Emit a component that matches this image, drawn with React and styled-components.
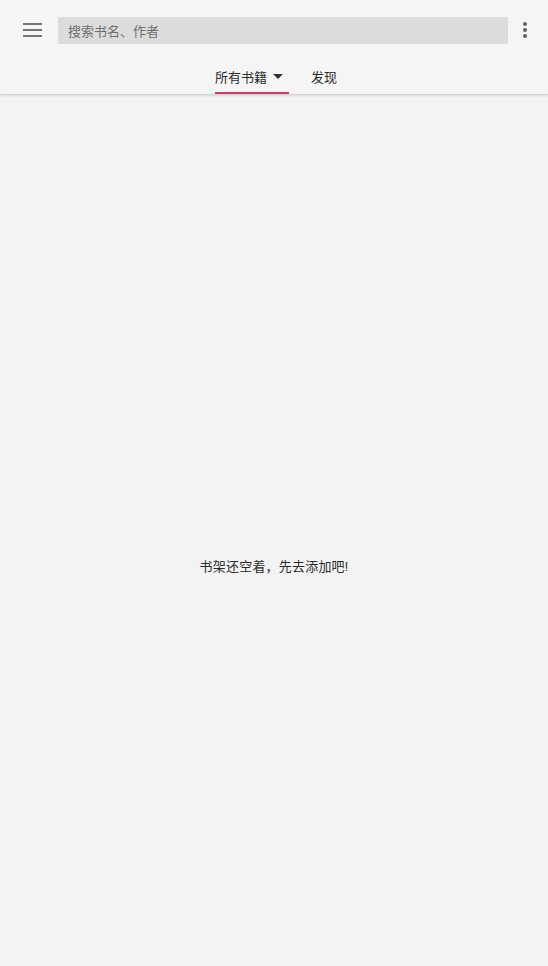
import styled, { createGlobalStyle } from "styled-components"

const GlobalStyle = createGlobalStyle`
html, body {
  margin: 0;
  padding: 0;
  background: #f3f3f3;
}
body {
  font-family: Roboto, "Noto Sans CJK SC", "Noto Sans", sans-serif;
}
`

const Page = styled.div`
width: 548px;
height: 966px;
display: flex;
flex-direction: column;
background: #f3f3f3;
`

const Header = styled.header`
background: #f5f5f5;
border-bottom: 1px solid #d6d6d6;
box-shadow: 0 1px 2px rgba(0,0,0,0.12);
position: relative;
z-index: 1;
`

const Toolbar = styled.div`
height: 60px;
display: flex;
align-items: center;
padding: 0 20px 0 22px;
`

const IconButton = styled.div`
width: ${props => props.w || 24}px;
height: 24px;
display: flex;
align-items: center;
justify-content: center;
color: #757575;
`

const SearchBox = styled.div`
flex: 1;
height: 27px;
margin: 0 14px 0 16px;
background: #dcdcdc;
border-radius: 2px;
display: flex;
align-items: center;
padding: 0 10px;
font-size: 13px;
color: #6f6f6f;
`

const Tabs = styled.div`
height: 34px;
display: flex;
justify-content: center;
gap: 22px;
padding-left: 4px;
`

const Tab = styled.div`
display: flex;
align-items: center;
gap: 6px;
font-size: 13px;
color: #2b2b2b;
height: 32px;
border-bottom: 2px solid ${props => props.active ? "#d33a6a" : "transparent"};
padding-right: ${props => props.active ? 6 : 0}px;
`

const Arrow = styled.span`
width: 0;
height: 0;
border-left: 5px solid transparent;
border-right: 5px solid transparent;
border-top: 5px solid #333;
margin-top: 1px;
`

const Body = styled.main`
flex: 1;
display: flex;
align-items: center;
justify-content: center;
padding-top: 70px;
`

const EmptyText = styled.p`
margin: 0;
font-size: 13px;
color: #2b2b2b;
letter-spacing: 0.2px;
`

const MenuIcon = () => (
    <svg width="19" height="14" viewBox="0 0 19 14">
        <rect x="0" y="0" width="19" height="2" fill="#757575" />
        <rect x="0" y="6" width="19" height="2" fill="#757575" />
        <rect x="0" y="12" width="19" height="2" fill="#757575" />
    </svg>
)

const MoreIcon = () => (
    <svg width="4" height="16" viewBox="0 0 4 16">
        <circle cx="2" cy="2" r="2" fill="#616161" />
        <circle cx="2" cy="8" r="2" fill="#616161" />
        <circle cx="2" cy="14" r="2" fill="#616161" />
    </svg>
)

const App = () => {
    return (
        <Page>
            <GlobalStyle />
            <Header>
                <Toolbar>
                    <IconButton w={20}><MenuIcon /></IconButton>
                    <SearchBox>搜索书名、作者</SearchBox>
                    <IconButton w={6}><MoreIcon /></IconButton>
                </Toolbar>
                <Tabs>
                    <Tab active>所有书籍<Arrow /></Tab>
                    <Tab>发现</Tab>
                </Tabs>
            </Header>
            <Body>
                <EmptyText>书架还空着，先去添加吧!</EmptyText>
            </Body>
        </Page>
    )
}

export default App
